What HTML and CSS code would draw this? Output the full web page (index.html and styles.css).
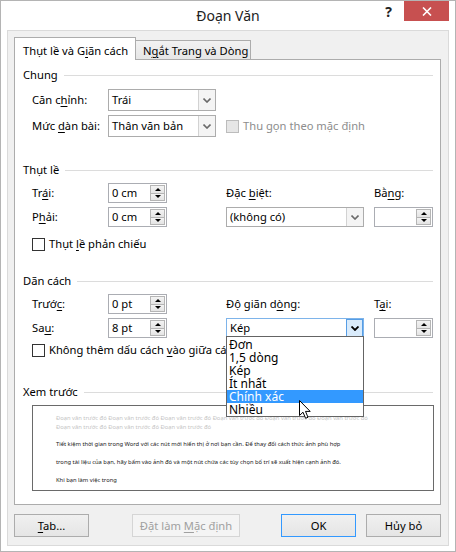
FILE: index.html
```html
<!DOCTYPE html>
<html lang="vi">
<head>
<meta charset="utf-8">
<title>Đoạn Văn</title>
<link rel="stylesheet" href="styles.css">
</head>
<body>
<div class="window">
  <header class="titlebar">
    <div class="title">Đoạn Văn</div>
    <div class="caption-btns">
      <span class="help">?</span>
      <span class="close"><svg width="10" height="9" viewBox="0 0 10 9"><path d="M1 0.5 L9 8.5 M9 0.5 L1 8.5" stroke="#fff" stroke-width="1.6"/></svg></span>
    </div>
  </header>
  <div class="client">
    <div class="tabs">
      <div class="tab active">Thụt lề và G<u>i</u>ãn cách</div>
      <div class="tab inactive">N<u>g</u>ắt Trang và Dòng</div>
    </div>
    <div class="panel">
      <section class="group">
        <div class="group-title">Chung</div>
        <div class="grid grid-general">
          <label class="c1">Căn c<u>h</u>ỉnh:</label>
          <div class="combo tall c2"><span class="combo-text">Trái</span><span class="combo-btn"><svg width="8" height="5" viewBox="0 0 8 5"><path d="M0.5 0.5 L4 4 L7.5 0.5" fill="none" stroke="#6a6a6a" stroke-width="1.6"/></svg></span></div>
          <label class="c1">Mức <u>d</u>àn bài:</label>
          <div class="combo tall c2"><span class="combo-text">Thân văn bản</span><span class="combo-btn"><svg width="8" height="5" viewBox="0 0 8 5"><path d="M0.5 0.5 L4 4 L7.5 0.5" fill="none" stroke="#6a6a6a" stroke-width="1.6"/></svg></span></div>
          <div class="check-row disabled c4"><span class="cb"></span><span>Thu gọn theo mặc định</span></div>
        </div>
      </section>

      <section class="group g-indent">
        <div class="group-title">Thụt lề</div>
        <div class="grid grid-form">
          <label class="c1">Tr<u>á</u>i:</label>
          <div class="spin c2"><span class="spin-text">0 cm</span><span class="spin-btns"><span class="up"></span><span class="down"></span></span></div>
          <label class="c4">Đặc <u>b</u>iệt:</label>
          <label class="c6">Bằ<u>n</u>g:</label>
          <label class="c1">P<u>h</u>ải:</label>
          <div class="spin c2"><span class="spin-text">0 cm</span><span class="spin-btns"><span class="up"></span><span class="down"></span></span></div>
          <div class="combo c4"><span class="combo-text">(không có)</span><span class="combo-btn"><svg width="8" height="5" viewBox="0 0 8 5"><path d="M0.5 0.5 L4 4 L7.5 0.5" fill="none" stroke="#6a6a6a" stroke-width="1.6"/></svg></span></div>
          <div class="spin c6"><span class="spin-text"></span><span class="spin-btns"><span class="up"></span><span class="down"></span></span></div>
        </div>
        <div class="check-row row-mirror"><span class="cb"></span><span>Thụt <u>l</u>ề phản chiếu</span></div>
      </section>

      <section class="group g-spacing">
        <div class="group-title">Dãn cách</div>
        <div class="grid grid-form">
          <label class="c1">Trướ<u>c</u>:</label>
          <div class="spin c2"><span class="spin-text">0 pt</span><span class="spin-btns"><span class="up"></span><span class="down"></span></span></div>
          <label class="c4">Độ giãn d<u>ò</u>ng:</label>
          <label class="c6">T<u>ạ</u>i:</label>
          <label class="c1">Sa<u>u</u>:</label>
          <div class="spin c2"><span class="spin-text">8 pt</span><span class="spin-btns"><span class="up"></span><span class="down"></span></span></div>
          <div class="combo open c4">
            <span class="combo-text">Kép</span><span class="combo-btn"><svg width="8" height="5" viewBox="0 0 8 5"><path d="M0.5 0.5 L4 4 L7.5 0.5" fill="none" stroke="#000" stroke-width="1.8"/></svg></span>
            <ul class="dropdown">
              <li>Đơn</li>
              <li>1,5 dòng</li>
              <li>Kép</li>
              <li>Ít nhất</li>
              <li class="selected">Chính xác</li>
              <li>Nhiều</li>
              <li class="cursor-item"><svg class="cursor" width="13" height="20" viewBox="0 0 13 20"><path d="M0.5 0.5 L0.5 15.5 L4 12.2 L6.6 18.3 L9 17.3 L6.5 11.4 L11.2 11.4 Z" fill="#fff" stroke="#000" stroke-width="1" stroke-linejoin="round"/></svg></li>
            </ul>
          </div>
          <div class="spin c6"><span class="spin-text"></span><span class="spin-btns"><span class="up"></span><span class="down"></span></span></div>
        </div>
        <div class="check-row row-nospace"><span class="cb"></span><span>Không thêm dấu cách <u>v</u>ào giữa các đoạn văn cùng kiểu</span></div>
      </section>

      <section class="group g-preview">
        <div class="group-title">Xem trước</div>
        <div class="preview">
          <p class="prev-line">Đoạn văn trước đó Đoạn văn trước đó Đoạn văn trước đó Đoạn văn trước đó Đoạn văn trước đó Đoạn văn trước đó</p>
          <p class="prev-line">Đoạn văn trước đó Đoạn văn trước đó Đoạn văn trước đó</p>
          <p class="cur-line first">Tiết kiệm thời gian trong Word với các nút mới hiển thị ở nơi bạn cần. Để thay đổi cách thức ảnh phù hợp</p>
          <p class="cur-line">trong tài liệu của bạn, hãy bấm vào ảnh đó và một nút chứa các tùy chọn bố trí sẽ xuất hiện cạnh ảnh đó.</p>
          <p class="cur-line">Khi bạn làm việc trong</p>
        </div>
      </section>
    </div>
    <div class="buttons">
      <button class="btn"><u>T</u>ab...</button>
      <button class="btn btn-wide" disabled>Đặt làm <u>M</u>ặc định</button>
      <button class="btn btn-default">OK</button>
      <button class="btn">Hủy bỏ</button>
    </div>
  </div>
</div>
</body>
</html>
```

FILE: styles.css
```css
* { box-sizing: border-box; }
html, body { margin: 0; padding: 0; }
body {
  width: 456px;
  height: 552px;
  overflow: hidden;
  background: #fff;
  font-family: "Segoe UI", "Noto Sans", "Open Sans", sans-serif;
  font-size: 11.2px;
  color: #000;
}
u { text-decoration: underline; text-underline-offset: 2px; }

.window {
  width: 456px;
  height: 552px;
  border: 1px solid #b4b4b4;
  background: #fff;
  display: flex;
  flex-direction: column;
}

/* title bar */
.titlebar {
  height: 29px;
  display: grid;
  grid-template-columns: 1fr auto 1fr;
  align-items: start;
}
.title {
  grid-column: 2;
  font-size: 14px;
  line-height: 29px;
  color: #222;
}
.caption-btns {
  grid-column: 3;
  justify-self: end;
  display: flex;
  align-items: flex-start;
  margin-right: 6px;
}
.help {
  font-size: 14px;
  font-weight: bold;
  line-height: 22px;
  color: #222;
  margin-right: 12px;
}
.close {
  width: 45px;
  height: 20px;
  background: #c75050;
  display: flex;
  align-items: center;
  justify-content: center;
}

/* client */
.client {
  flex: 1;
  margin: 0 6px 6px;
  border: 1px solid #dadada;
  background: #f0f0f0;
  padding: 6px 7px 8px 6px;
  display: flex;
  flex-direction: column;
}

.tabs {
  display: flex;
  align-items: flex-end;
  height: 23px;
  margin-bottom: -1px;
  position: relative;
  z-index: 2;
}
.tab {
  white-space: nowrap;
  line-height: 16px;
}
.tab.active {
  width: 122px;
  height: 23px;
  background: #fff;
  border: 1px solid #acacac;
  border-bottom: none;
  padding: 5px 0 0 8px;
}
.tab.inactive {
  width: 115px;
  height: 19px;
  margin-bottom: 1px;
  background: linear-gradient(#f2f2f2, #e6e6e6);
  border: 1px solid #acacac;
  border-left: none;
  border-bottom: none;
  padding: 2px 0 0 7px;
}

.panel {
  height: 446px;
  border: 1px solid #acacac;
  background: #fff;
  padding: 7px 7px 0 8px;
  position: relative;
  z-index: 1;
}

.group-title {
  display: flex;
  align-items: center;
  height: 16px;
  line-height: 16px;
  white-space: nowrap;
}
.group-title::after {
  content: "";
  flex: 1;
  height: 1px;
  background: #dcdcdc;
  margin-left: 6px;
  margin-top: 1px;
}

.grid {
  display: grid;
  margin-left: 9px;
  row-gap: 4px;
  align-items: center;
}
.grid label { white-space: nowrap; line-height: 16px; }
.grid-general {
  margin-top: 6px;
  grid-template-columns: 76px 108px 10px 1fr;
  grid-auto-rows: 22px;
}
.grid-form {
  margin-top: 5px;
  grid-template-columns: 76px 59px 59px 138px 10px 59px;
  grid-auto-rows: 20px;
}
.c1 { grid-column: 1; }
.c2 { grid-column: 2; }
.c4 { grid-column: 4; }
.c6 { grid-column: 6; }

.g-indent { margin-top: 25px; }
.g-spacing { margin-top: 21px; }
.g-preview { margin-top: 26px; }

/* combo */
.combo {
  display: flex;
  height: 20px;
  border: 1px solid #acacac;
  background: #fff;
  position: relative;
}
.combo.tall { height: 22px; }
.combo-text {
  flex: 1;
  padding-left: 3px;
  line-height: 18px;
  white-space: nowrap;
}
.combo.tall .combo-text { line-height: 20px; }
.combo-btn {
  width: 17px;
  border-left: 1px solid #d2d2d2;
  background: #f4f4f4;
  display: flex;
  align-items: center;
  justify-content: center;
}
.combo.open { border-color: #7eb4ea; }
.combo.open .combo-btn {
  background: #d9ebfb;
  border: 1px solid #569de5;
}

.dropdown {
  position: absolute;
  left: -1px;
  right: -1px;
  top: calc(100% - 1px);
  margin: 0;
  padding: 1px 0 0;
  list-style: none;
  background: #fff;
  border: 1px solid #646464;
  height: 81px;
  z-index: 5;
  font-size: 12px;
}
.dropdown li {
  height: 13px;
  line-height: 13px;
  padding-left: 2px;
  white-space: nowrap;
}
.dropdown li.selected {
  background: #3399ff;
  color: #fff;
}
.dropdown li.cursor-item { height: 0; position: relative; }
.cursor {
  position: absolute;
  left: 72px;
  top: -16px;
}

/* spin */
.spin {
  display: flex;
  height: 20px;
  border: 1px solid #abadb3;
  background: #fff;
}
.spin-text {
  flex: 1;
  padding-left: 3px;
  line-height: 18px;
  white-space: nowrap;
}
.spin-btns {
  width: 16px;
  display: flex;
  flex-direction: column;
  padding: 1px 1px 1px 0;
}
.spin-btns span {
  flex: 1;
  border: 1px solid #b5b5b5;
  background: linear-gradient(#f3f3f3, #e4e4e4);
  display: flex;
  align-items: center;
  justify-content: center;
}
.spin-btns span + span { border-top: none; }
.spin-btns .up::after {
  content: "";
  border-left: 3px solid transparent;
  border-right: 3px solid transparent;
  border-bottom: 3px solid #000;
}
.spin-btns .down::after {
  content: "";
  border-left: 3px solid transparent;
  border-right: 3px solid transparent;
  border-top: 3px solid #000;
}

/* checkbox */
.check-row {
  display: flex;
  align-items: center;
  gap: 4px;
  height: 16px;
  line-height: 16px;
  white-space: nowrap;
}
.cb {
  width: 13px;
  height: 13px;
  flex: none;
  border: 1px solid #333;
  background: #fff;
}
.check-row.disabled { color: #8d8d8d; }
.check-row.disabled .cb { border-color: #bcbcbc; background: #e6e6e6; }
.row-mirror { margin: 9px 0 0 9px; }
.row-nospace { margin: 4px 0 0 9px; width: 194px; overflow: hidden; }

/* preview */
.preview {
  margin: 5px 0 0 9px;
  width: 402px;
  height: 86px;
  border: 1px solid #6a6a6a;
  background: #fff;
  padding: 8px 0 0 23px;
  font-size: 5.8px;
}
.preview p { margin: 0; white-space: nowrap; }
.prev-line { line-height: 9px; color: #c4c4c4; }
.cur-line { line-height: 18px; color: #202020; }
.cur-line.first { margin-top: 3px; }

/* buttons */
.buttons {
  display: flex;
  margin-top: 9px;
  height: 23px;
}
.btn {
  width: 75px;
  height: 23px;
  font: inherit;
  color: #000;
  border: 1px solid #acacac;
  background: linear-gradient(#f0f0f0, #e5e5e5);
  padding: 0;
  margin: 0;
}
.btn-wide { width: 108px; margin-left: 43px; }
.btn[disabled] {
  color: #a0a0a0;
  border-color: #d5d5d5;
  background: #f4f4f4;
}
.btn-default { margin-left: auto; border-color: #3399ff; margin-right: 10px; }
```
